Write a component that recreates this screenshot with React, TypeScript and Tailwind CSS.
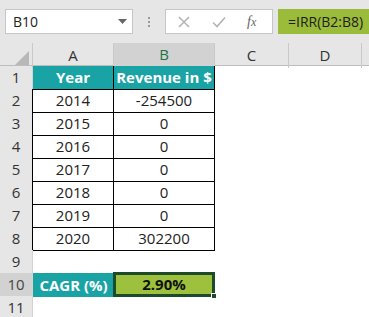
import React from 'react';

const font = { fontFamily: '"Open Sans", "Liberation Sans", sans-serif' };

const data: [string, string][] = [
  ['2014', '-254500'],
  ['2015', '0'],
  ['2016', '0'],
  ['2017', '0'],
  ['2018', '0'],
  ['2019', '0'],
  ['2020', '302200'],
];

const cols = 'grid grid-cols-[33px_81px_101px_74px_73px_1fr]';

function RowHead({ n, active }: { n: number; active?: boolean }) {
  return (
    <div
      className={`flex items-center justify-center border-r border-b border-[#d4d4d4] text-[15px] ${
        active ? 'bg-[#d2d2d2] text-[#444]' : 'bg-[#e6e6e6] text-[#333]'
      }`}
    >
      {n}
    </div>
  );
}

export default function App() {
  return (
    <div className="w-[369px] h-[317px] overflow-hidden bg-white" style={font}>
      {/* formula bar */}
      <div className="h-[43px] bg-[#e6e6e6] flex items-start pt-[9px] pl-[5px] gap-0">
        <div className="w-[128px] h-[25px] bg-white border border-[#c6c6c6] flex items-center justify-between pl-[7px] pr-[5px]">
          <span className="text-[14px] text-[#222]">B10</span>
          <svg width="9" height="5" viewBox="0 0 9 5">
            <path d="M0 0h9L4.5 5z" fill="#666" />
          </svg>
        </div>
        <div className="w-[32px] h-[25px] flex flex-col items-center justify-center gap-[2px]">
          <span className="w-[2px] h-[2px] bg-[#9a9a9a]" />
          <span className="w-[2px] h-[2px] bg-[#9a9a9a]" />
          <span className="w-[2px] h-[2px] bg-[#9a9a9a]" />
        </div>
        <div className="w-[108px] h-[25px] bg-white border border-[#c6c6c6] flex items-center">
          <svg width="12" height="12" viewBox="0 0 12 12" className="ml-[12px]">
            <path d="M1 1l10 10M11 1L1 11" stroke="#b4b4b4" strokeWidth="1.6" />
          </svg>
          <svg width="14" height="12" viewBox="0 0 14 12" className="ml-[22px]">
            <path d="M1 6.5l4 4L13 1.5" stroke="#b4b4b4" strokeWidth="1.6" fill="none" />
          </svg>
          <span
            className="ml-[21px] text-[14px] italic text-[#666]"
            style={{ fontFamily: '"Liberation Serif", serif' }}
          >
            f<span className="text-[12px]">x</span>
          </span>
        </div>
        <div className="ml-[5px] flex-1 h-[25px] bg-[#9bbb3b] flex items-center pl-[10px] text-[14px] text-[#1e1e1e] whitespace-nowrap">
          =IRR(B2:B8)
        </div>
      </div>

      {/* column headers */}
      <div className={`${cols} h-[23px] bg-[#e6e6e6] border-b border-[#bdbdbd] text-[15px] text-[#333]`}>
        <div className="relative border-r border-[#c9c9c9]">
          <svg width="14" height="14" viewBox="0 0 14 14" className="absolute right-[3px] bottom-[3px]">
            <path d="M14 0v14H0z" fill="#b8b8b8" />
          </svg>
        </div>
        <div className="flex items-center justify-center border-r border-[#c9c9c9]">A</div>
        <div className="flex items-center justify-center border-r border-[#c9c9c9] bg-[#d2d2d2] text-[#217346] border-b-2 border-b-[#217346]">
          B
        </div>
        <div className="flex items-center justify-center border-r border-[#c9c9c9]">C</div>
        <div className="flex items-center justify-center border-r border-[#c9c9c9]">D</div>
        <div />
      </div>

      {/* row 1 */}
      <div className={`${cols} h-[23px] text-[15px]`}>
        <RowHead n={1} />
        <div className="flex items-center justify-center bg-[#19a3a5] text-white font-bold border-r border-b border-black">
          Year
        </div>
        <div className="flex items-center justify-center bg-[#19a3a5] text-white font-bold border-r border-b border-black">
          Revenue in $
        </div>
        <div />
        <div />
        <div />
      </div>

      {data.map(([y, v], i) => (
        <div key={y} className={`${cols} h-[23px] text-[15px] text-[#222]`}>
          <RowHead n={i + 2} />
          <div className="flex items-center justify-center border-r border-b border-l border-black -ml-px">{y}</div>
          <div className="flex items-center justify-center border-r border-b border-black">{v}</div>
          <div />
          <div />
          <div />
        </div>
      ))}

      {/* row 9 */}
      <div className={`${cols} h-[23px] text-[15px]`}>
        <RowHead n={9} />
        <div />
        <div />
        <div />
        <div />
        <div />
      </div>

      {/* row 10 */}
      <div className={`${cols} h-[23px] text-[15px]`}>
        <RowHead n={10} active />
        <div className="flex items-center justify-center bg-[#19a3a5] text-white font-bold">CAGR (%)</div>
        <div className="relative flex items-center justify-center bg-[#9dc13c] text-[#111] font-bold border-[3px] border-[#1d4a2b] -ml-px -mt-px h-[25px]">
          2.90%
          <span className="absolute -right-[5px] -bottom-[5px] w-[6px] h-[6px] bg-[#1d4a2b] border border-white" />
        </div>
        <div />
        <div />
        <div />
      </div>

      {/* row 11 */}
      <div className={`${cols} h-[23px] text-[15px]`}>
        <RowHead n={11} />
        <div />
        <div />
        <div />
        <div />
        <div />
      </div>
    </div>
  );
}
